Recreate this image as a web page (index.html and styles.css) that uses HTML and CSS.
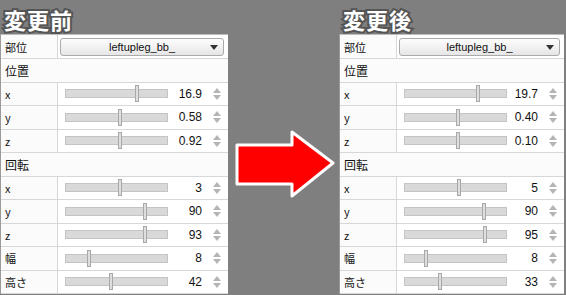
FILE: index.html
```html
<!DOCTYPE html>
<html lang="ja">
	<head>
		<meta charset="UTF-8" />
		<title>変更前 / 変更後</title>
		<link rel="stylesheet" href="styles.css">
	</head>
	<body>
		<div class="stage">
			<div class="panel panel-left">
				<div class="title">変更前</div>
				<div class="sheet">
					<div class="row">
						<div class="label">部位</div>
						<div class="cell"><div class="select">leftupleg_bb_<span class="caret"></span></div></div>
					</div>
					<div class="row head"><div class="label">位置</div></div>
					<div class="row"><div class="label">x</div><div class="cell"><div class="track"><span class="thumb" style="left: 69px"></span></div><span class="value">16.9</span><span class="spin"></span></div></div>
					<div class="row"><div class="label">y</div><div class="cell"><div class="track"><span class="thumb" style="left: 52px"></span></div><span class="value">0.58</span><span class="spin"></span></div></div>
					<div class="row"><div class="label">z</div><div class="cell"><div class="track"><span class="thumb" style="left: 52px"></span></div><span class="value">0.92</span><span class="spin"></span></div></div>
					<div class="row head"><div class="label">回転</div></div>
					<div class="row"><div class="label">x</div><div class="cell"><div class="track"><span class="thumb" style="left: 52px"></span></div><span class="value">3</span><span class="spin"></span></div></div>
					<div class="row"><div class="label">y</div><div class="cell"><div class="track"><span class="thumb" style="left: 77px"></span></div><span class="value">90</span><span class="spin"></span></div></div>
					<div class="row"><div class="label">z</div><div class="cell"><div class="track"><span class="thumb" style="left: 77px"></span></div><span class="value">93</span><span class="spin"></span></div></div>
					<div class="row"><div class="label">幅</div><div class="cell"><div class="track"><span class="thumb" style="left: 21px"></span></div><span class="value">8</span><span class="spin"></span></div></div>
					<div class="row"><div class="label">高さ</div><div class="cell"><div class="track"><span class="thumb" style="left: 43px"></span></div><span class="value">42</span><span class="spin"></span></div></div>
				</div>
			</div>

			<div class="arrow">
				<svg width="100" height="70" viewBox="0 0 100 70">
					<polygon points="2,15 57,15 57,2 98,33 57,66 57,54 2,54" fill="#ff0000" stroke="#ffffff" stroke-width="3" stroke-linejoin="round" />
				</svg>
			</div>

			<div class="panel panel-right">
				<div class="title">変更後</div>
				<div class="sheet">
					<div class="row">
						<div class="label">部位</div>
						<div class="cell"><div class="select">leftupleg_bb_<span class="caret"></span></div></div>
					</div>
					<div class="row head"><div class="label">位置</div></div>
					<div class="row"><div class="label">x</div><div class="cell"><div class="track"><span class="thumb" style="left: 71px"></span></div><span class="value">19.7</span><span class="spin"></span></div></div>
					<div class="row"><div class="label">y</div><div class="cell"><div class="track"><span class="thumb" style="left: 51px"></span></div><span class="value">0.40</span><span class="spin"></span></div></div>
					<div class="row"><div class="label">z</div><div class="cell"><div class="track"><span class="thumb" style="left: 51px"></span></div><span class="value">0.10</span><span class="spin"></span></div></div>
					<div class="row head"><div class="label">回転</div></div>
					<div class="row"><div class="label">x</div><div class="cell"><div class="track"><span class="thumb" style="left: 52px"></span></div><span class="value">5</span><span class="spin"></span></div></div>
					<div class="row"><div class="label">y</div><div class="cell"><div class="track"><span class="thumb" style="left: 77px"></span></div><span class="value">90</span><span class="spin"></span></div></div>
					<div class="row"><div class="label">z</div><div class="cell"><div class="track"><span class="thumb" style="left: 78px"></span></div><span class="value">95</span><span class="spin"></span></div></div>
					<div class="row"><div class="label">幅</div><div class="cell"><div class="track"><span class="thumb" style="left: 19px"></span></div><span class="value">8</span><span class="spin"></span></div></div>
					<div class="row"><div class="label">高さ</div><div class="cell"><div class="track"><span class="thumb" style="left: 33px"></span></div><span class="value">33</span><span class="spin"></span></div></div>
				</div>
			</div>
		</div>
	</body>
</html>
```

FILE: styles.css
```css
body {
	margin: 0;
	background: #7f7f7f;
	font-family: "Noto Sans CJK JP", "Liberation Sans", sans-serif;
	font-size: 11px;
	color: #111;
}
.stage {
	display: flex;
	height: 295px;
	overflow: hidden;
}
.panel {
	display: flex;
	flex-direction: column;
}
.panel-left {
	width: 228px;
}
.panel-right {
	width: 225px;
}
.title {
	height: 34px;
	padding-left: 4px;
	font-size: 22px;
	font-weight: bold;
	line-height: 38px;
	letter-spacing: 1px;
	color: #fff;
	-webkit-text-stroke: 4px #555;
	paint-order: stroke fill;
	white-space: nowrap;
}
.sheet {
	background: #fff;
	border-left: 1px solid #9a9a9a;
	border-top: 1px solid #bdbdbd;
}
.row {
	display: grid;
	grid-template-columns: 57px 1fr;
	height: 22.5px;
	border-bottom: 1px solid #d7d7d7;
}
.row:first-child {
	height: 23px;
}
.label {
	display: flex;
	align-items: center;
	padding-left: 4px;
	border-right: 1px solid #d7d7d7;
	background: #fbfbfb;
}
.row.head {
	grid-template-columns: 1fr;
}
.row.head .label {
	border-right: none;
	font-size: 12px;
}
.cell {
	display: flex;
	align-items: center;
	padding-left: 7px;
}
.select {
	position: relative;
	flex: 1;
	height: 16px;
	margin-right: 4px;
	margin-left: -5px;
	border: 1px solid #aaa;
	border-radius: 3px;
	background: linear-gradient(#fdfdfd, #e6e6e6);
	text-align: center;
	font-family: "Liberation Sans", sans-serif;
	line-height: 16px;
}
.caret {
	position: absolute;
	right: 5px;
	top: 6px;
	border-left: 4px solid transparent;
	border-right: 4px solid transparent;
	border-top: 5px solid #333;
}
.track {
	position: relative;
	width: 101px;
	height: 7px;
	border: 1px solid #c4c4c4;
	background: #d9d9d9;
}
.thumb {
	position: absolute;
	top: -5px;
	width: 2px;
	height: 15px;
	border: 1px solid #a8a8a8;
	background: #dedede;
}
.value {
	flex: 1;
	text-align: right;
	font-family: "Liberation Sans Narrow", "Liberation Sans", sans-serif;
	font-size: 12px;
}
.spin {
	position: relative;
	width: 20px;
	height: 14px;
	margin-left: 6px;
}
.spin::before,
.spin::after {
	content: "";
	position: absolute;
	left: 5px;
	border-left: 4px solid transparent;
	border-right: 4px solid transparent;
}
.spin::before {
	top: 1px;
	border-bottom: 5px solid #b5b5b5;
}
.spin::after {
	top: 8px;
	border-top: 5px solid #b5b5b5;
}
.arrow {
	width: 111px;
	display: flex;
	align-items: flex-start;
	padding-top: 130px;
	padding-left: 7px;
	box-sizing: border-box;
}
```
